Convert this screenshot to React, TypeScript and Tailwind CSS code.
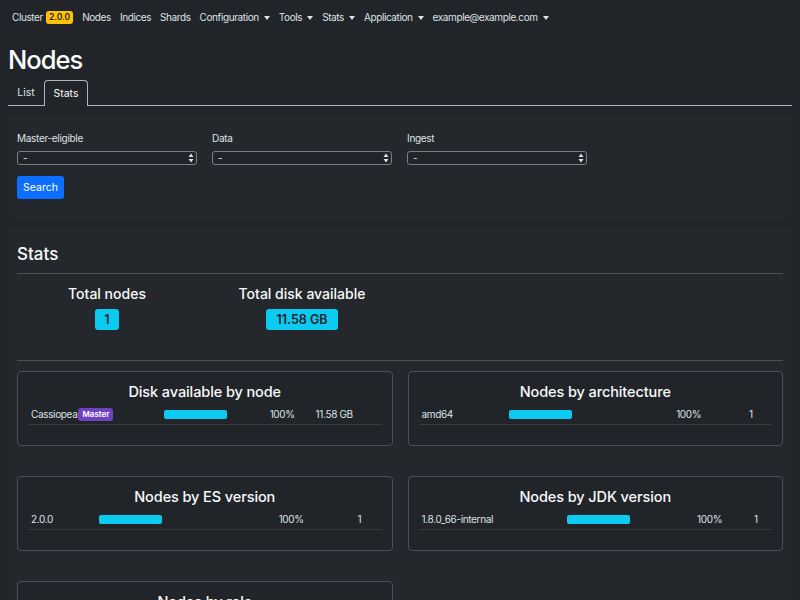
import React from 'react';

type Row = { label: string; master?: boolean; pct: string; value: string };

interface StatCardProps {
  title: string;
  rows: Row[];
  cols: [string, string, string, string];
}

const Caret = () => (
  <span className="ml-[5px] inline-block border-x-[3.5px] border-t-[4px] border-x-transparent border-t-current align-middle" />
);

const NavItem: React.FC<{ label: string; dropdown?: boolean }> = ({ label, dropdown }) => (
  <span className="flex items-center text-[#dee2e6]">
    {label}
    {dropdown && <Caret />}
  </span>
);

const StatCard: React.FC<StatCardProps> = ({ title, rows, cols }) => (
  <div className="h-[75px] rounded border border-[#495057] bg-[#212529] px-[10px] pt-[7px]">
    <h5 className="text-center text-[14.5px] font-medium leading-[26px] tracking-[-0.1px] text-[#f8f9fa]">{title}</h5>
    {rows.map((row, i) => (
      <div
        key={i}
        className="flex h-[20px] items-center border-b border-[#373b3e] text-[10px] tracking-[-0.35px] text-[#dee2e6]"
      >
        <div className={`${cols[0]} flex items-center pl-[3px]`}>
          {row.label}
          {row.master && (
            <span className="ml-[1px] rounded-[3px] bg-[#6f42c1] px-[4px] py-[1px] text-[8px] font-semibold leading-[11px] tracking-normal text-white">
              Master
            </span>
          )}
        </div>
        <div className={cols[1]}>
          <div className="h-[9px] w-[63px] rounded-[2px] bg-[#0dcaf0]" />
        </div>
        <div className={cols[2]}>{row.pct}</div>
        <div className={cols[3]}>{row.value}</div>
      </div>
    ))}
  </div>
);

const SelectBox: React.FC<{ label: string }> = ({ label }) => (
  <div className="w-[180px]">
    <div className="mb-[6px] text-[10px] leading-[14px] tracking-[-0.3px] text-[#dee2e6]">{label}</div>
    <div className="flex h-[14px] items-center justify-between rounded-[3px] border border-[#7a7f85] bg-[#212529] pl-[5px] pr-[2px] text-[10px] text-[#dee2e6]">
      <span className="leading-none">-</span>
      <svg width="6" height="10" viewBox="0 0 6 10" className="text-[#dee2e6]">
        <path d="M3 0.5 L5.5 4 H0.5 Z M3 9.5 L5.5 6 H0.5 Z" fill="currentColor" />
      </svg>
    </div>
  </div>
);

export default function App() {
  return (
    <div className="min-h-screen bg-[#212529] font-['Inter','Liberation_Sans',sans-serif] text-[#dee2e6]">
      <nav className="flex h-[35px] items-center gap-[9px] px-[12px] text-[10px] tracking-[-0.4px]">
        <span className="flex items-center text-[#dee2e6]">
          Cluster
          <span className="ml-[3px] rounded-[3px] bg-[#ffc107] px-[3px] py-[1px] text-[8.5px] font-semibold leading-[11px] tracking-normal text-[#212529]">
            2.0.0
          </span>
        </span>
        <NavItem label="Nodes" />
        <NavItem label="Indices" />
        <NavItem label="Shards" />
        <NavItem label="Configuration" dropdown />
        <NavItem label="Tools" dropdown />
        <NavItem label="Stats" dropdown />
        <NavItem label="Application" dropdown />
        <NavItem label="example@example.com" dropdown />
      </nav>

      <div className="px-[8px]">
        <h1 className="mt-[9px] text-[25.5px] font-medium leading-[32px] tracking-[-1px] text-white">Nodes</h1>
        <div className="mt-[4px] flex h-[26px] border-b border-[#adb5bd] text-[10.5px]">
          <div className="flex w-[36px] items-center justify-center text-[#dee2e6]">List</div>
          <div className="mb-[-1px] flex w-[44px] items-center justify-center rounded-t-[4px] border border-b-0 border-[#adb5bd] bg-[#212529] text-[#f8f9fa]">
            Stats
          </div>
        </div>

        <div className="mt-[10px] rounded-b bg-[#24282c] px-[9px] pb-[19px] pt-[15px]">
          <div className="flex gap-[15px]">
            <SelectBox label="Master-eligible" />
            <SelectBox label="Data" />
            <SelectBox label="Ingest" />
          </div>
          <button className="mt-[11px] h-[23px] w-[47px] rounded-[3px] bg-[#0d6efd] text-[10.5px] text-white">Search</button>
        </div>

        <div className="mt-[10px] bg-[#24282c] px-[9px] pt-[14px] pb-[10px]">
          <h3 className="text-[17px] font-medium leading-[24px] text-[#f8f9fa]">Stats</h3>
          <div className="mt-[7px] border-t border-[#4b5055]" />
          <div className="flex h-[86px] pt-[10px]">
            <div className="flex w-[180px] flex-col items-center">
              <div className="text-[14px] font-medium leading-[20px] text-[#f8f9fa]">Total nodes</div>
              <span className="mt-[5px] rounded-[3px] bg-[#0dcaf0] px-[9px] py-[3px] text-[12.5px] font-semibold leading-[15px] text-[#212529]">1</span>
            </div>
            <div className="ml-[15px] flex w-[180px] flex-col items-center">
              <div className="text-[14px] font-medium leading-[20px] text-[#f8f9fa]">Total disk available</div>
              <span className="mt-[5px] rounded-[3px] bg-[#0dcaf0] px-[10px] py-[3px] text-[12.5px] font-semibold leading-[15px] text-[#212529]">11.58 GB</span>
            </div>
          </div>
          <div className="border-t border-[#4b5055]" />

          <div className="mt-[10px] grid grid-cols-2 gap-x-[15px] gap-y-[30px]">
            <StatCard
              title="Disk available by node"
              cols={['w-[136px]', 'w-[106px]', 'w-[46px]', 'w-[66px]']}
              rows={[{ label: 'Cassiopea', master: true, pct: '100%', value: '11.58 GB' }]}
            />
            <StatCard
              title="Nodes by architecture"
              cols={['w-[91px]', 'w-[167px]', 'w-[73px]', 'w-[23px]']}
              rows={[{ label: 'amd64', pct: '100%', value: '1' }]}
            />
            <StatCard
              title="Nodes by ES version"
              cols={['w-[71px]', 'w-[180px]', 'w-[79px]', 'w-[24px]']}
              rows={[{ label: '2.0.0', pct: '100%', value: '1' }]}
            />
            <StatCard
              title="Nodes by JDK version"
              cols={['w-[149px]', 'w-[130px]', 'w-[57px]', 'w-[18px]']}
              rows={[{ label: '1.8.0_66-internal', pct: '100%', value: '1' }]}
            />
            <StatCard title="Nodes by role" cols={['w-[91px]', 'w-[167px]', 'w-[73px]', 'w-[23px]']} rows={[]} />
          </div>
        </div>
      </div>
    </div>
  );
}
